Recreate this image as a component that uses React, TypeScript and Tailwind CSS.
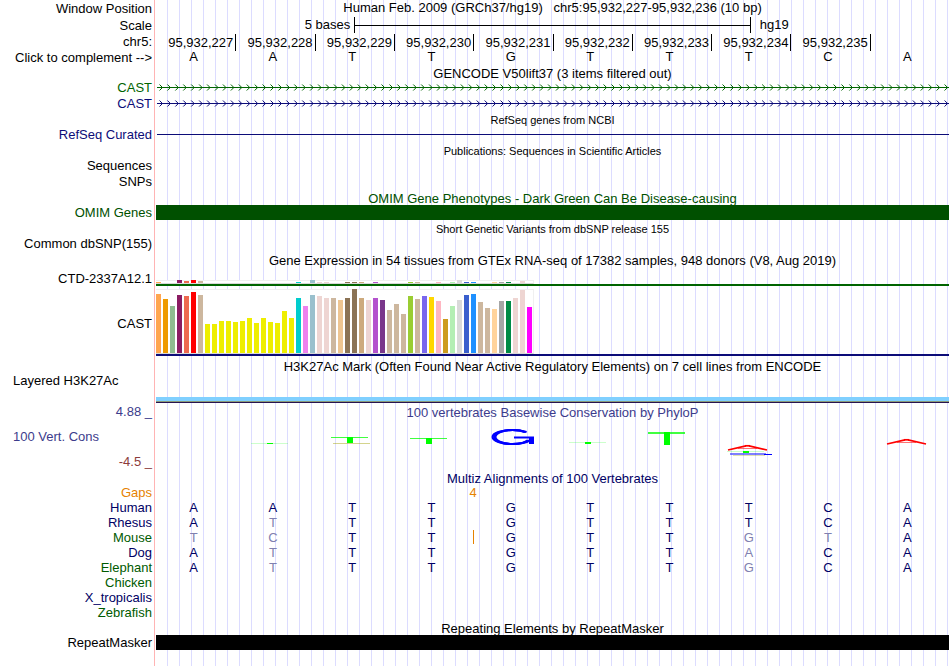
import React from "react";
import clsx from "clsx";

const POSITIONS = ["227", "228", "229", "230", "231", "232", "233", "234", "235"];
const BASES = "AATTGTTTCA".split("");

// GTEx tissues: bar color, CAST level, CTD-2337A12.1 level
const TISSUES: [string, number, number][] = [
  ["#ffa54f", 59, 1],
  ["#ee9a00", 54, 0],
  ["#8fbc8f", 47, 0],
  ["#8b1c62", 58, 3],
  ["#ee6a50", 57, 2],
  ["#ff0000", 61, 3],
  ["#cdb79e", 58, 2],
  ["#eeee00", 29, 0],
  ["#eeee00", 29, 0],
  ["#eeee00", 32, 0],
  ["#eeee00", 32, 0],
  ["#eeee00", 31, 0],
  ["#eeee00", 32, 0],
  ["#eeee00", 35, 0],
  ["#eeee00", 30, 0],
  ["#eeee00", 35, 0],
  ["#eeee00", 31, 0],
  ["#eeee00", 30, 0],
  ["#eeee00", 42, 0],
  ["#eeee00", 35, 0],
  ["#00cdcd", 55, 1],
  ["#ee82ee", 47, 0],
  ["#9ac0cd", 58, 3],
  ["#eed5d2", 57, 1],
  ["#eed5d2", 55, 1],
  ["#cdb79e", 55, 0],
  ["#eec591", 53, 0],
  ["#8b7355", 55, 1],
  ["#8b7355", 64, 1],
  ["#cdaa7d", 55, 1],
  ["#eed5d2", 53, 0],
  ["#b452cd", 55, 1],
  ["#7a378b", 53, 0],
  ["#cdb79e", 43, 0],
  ["#cdb79e", 49, 0],
  ["#cdb79e", 39, 0],
  ["#9acd32", 57, 1],
  ["#cdb79e", 54, 1],
  ["#7a67ee", 57, 0],
  ["#ffd700", 56, 0],
  ["#ffb6c1", 52, 1],
  ["#cd9b1d", 34, 0],
  ["#b4eeb4", 47, 1],
  ["#d9d9d9", 53, 3],
  ["#3a5fcd", 58, 1],
  ["#1e90ff", 59, 1],
  ["#cdb79e", 51, 0],
  ["#cdb79e", 45, 0],
  ["#ffd39b", 44, 1],
  ["#a6a6a6", 52, 1],
  ["#008b45", 52, 1],
  ["#eed5d2", 55, 0],
  ["#eed5d2", 63, 2],
  ["#ff00ff", 46, 0],
];

const SPECIES = [
  { name: "Human", color: "text-[#000064]", seq: "AATTGTTTCA" },
  { name: "Rhesus", color: "text-[#000064]", seq: "ATTTGTTTCA" },
  { name: "Mouse", color: "text-[#005a00]", seq: "TCTTGTTGTA" },
  { name: "Dog", color: "text-[#000064]", seq: "ATTTGTTACA" },
  { name: "Elephant", color: "text-[#005a00]", seq: "ATTTGTTGCA" },
  { name: "Chicken", color: "text-[#005a00]", seq: "" },
  { name: "X_tropicalis", color: "text-[#000064]", seq: "" },
  { name: "Zebrafish", color: "text-[#005a00]", seq: "" },
];

interface RowProps {
  label?: React.ReactNode;
  height?: string;
  labelClass?: string;
  children?: React.ReactNode;
}

function Row({ label, height = "h-4", labelClass, children }: RowProps) {
  return (
    <div className={clsx("flex", height)}>
      <div className={clsx("w-[156px] shrink-0 pr-1 text-right whitespace-nowrap", labelClass)}>{label}</div>
      <div className="min-w-0 flex-1">{children}</div>
    </div>
  );
}

interface TitleProps {
  children: React.ReactNode;
  small?: boolean;
  color?: string;
  label?: string;
  labelClass?: string;
}

function Title({ children, small, color, label, labelClass }: TitleProps) {
  return (
    <Row height="h-[15px]" label={label} labelClass={labelClass}>
      <h2 className={clsx("text-center leading-[17px] whitespace-pre", small && "text-[11px]", color)}>
        {children}
      </h2>
    </Row>
  );
}

function GeneLine({ color }: { color: string }) {
  return (
    <svg className="block h-[15px] w-full" stroke={color} fill="none">
      <line x1="1" x2="100%" y1="7.5" y2="7.5" shapeRendering="crispEdges" />
      {Array.from({ length: 100 }, (_, i) => (
        <svg key={i} x={`${i}%`} overflow="visible">
          <path d="M3.5 4.5 L6.5 7.5 L3.5 10.5" />
        </svg>
      ))}
    </svg>
  );
}

function Expression({ values, boxClass, lineClass }: { values: number[]; boxClass: string; lineClass: string }) {
  return (
    <>
      <div className={clsx("flex w-[378px] items-end gap-0.5 border-t border-r border-b border-[#f0f0f0] border-b-[#d8d8d8] bg-white", boxClass)}>
        {values.map((v, i) => (
          <div key={i} className="w-[5px] shrink-0" style={{ height: v, backgroundColor: TISSUES[i][0] }} />
        ))}
      </div>
      <div className={clsx("h-0.5", lineClass)} />
    </>
  );
}

// Wide, flat marks of the conservation logo
function LogoT({ y, h, bar = 1, faint }: { y: number; h: number; bar?: number; faint?: boolean }) {
  return (
    <g fill="#00ff00">
      <rect x="16" y={y} width="37" height={bar} opacity={faint ? 0.2 : 0.75} />
      <rect x="32" y={y} width="6" height={h} />
    </g>
  );
}

function LogoA({ y }: { y: number }) {
  return (
    <g stroke="#ff0000" strokeWidth="1.7">
      <line x1="17" y1={y + 5} x2="35" y2={y + 0.8} />
      <line x1="34" y1={y + 0.8} x2="39" y2={y + 0.8} />
      <line x1="38" y1={y + 0.8} x2="56" y2={y + 5} />
      <line x1="27" y1={y + 3.5} x2="46" y2={y + 3.5} strokeWidth="1" opacity="0.55" />
    </g>
  );
}

function LogoG() {
  return (
    <g fill="none" stroke="#0000ff">
      {[20, 18.5, 17].map((rx) => (
        <ellipse
          key={rx}
          cx="39.5"
          cy="18"
          rx={rx}
          ry="7"
          strokeWidth="2"
          pathLength="100"
          strokeDasharray="86 14"
          strokeDashoffset="-5"
        />
      ))}
      <line x1="41" y1="18.5" x2="61" y2="18.5" strokeWidth="2" />
      <line x1="58.5" y1="18" x2="58.5" y2="25" strokeWidth="5" />
    </g>
  );
}

const LOGO: Record<number, React.ReactNode> = {
  1: <LogoT y={24} h={1} faint />,
  2: (
    <>
      <LogoT y={18} h={6} />
      <rect x="18" y="24" width="37" height="1" fill="#a0a000" opacity="0.45" />
    </>
  ),
  3: <LogoT y={19} h={6} />,
  4: <LogoG />,
  5: <LogoT y={23} h={2} faint />,
  6: <LogoT y={13} h={13} bar={2} />,
  7: (
    <>
      <LogoA y={26} />
      <LogoT y={32} h={2} faint />
      <rect x="19" y="34" width="36" height="2" fill="#0000ff" opacity="0.5" />
      <rect x="53" y="35" width="8" height="1" fill="#0000ff" />
      <rect x="22" y="36" width="32" height="1" fill="#a0a000" opacity="0.3" />
    </>
  ),
  9: <LogoA y={20} />,
};

export default function App() {
  return (
    <main className="min-h-screen bg-white bg-[linear-gradient(#ffb4b4,#ffb4b4),repeating-linear-gradient(to_right,transparent_0_11px,#dcdcff_11px_12px)] bg-[size:1px_100%,100%_100%] bg-[position:154px_0,156px_0] bg-no-repeat pr-px font-['Liberation_Sans',Arial,sans-serif] text-[13px] leading-[15px] text-black">
      <Row height="h-[17px]" label="Window Position" labelClass="leading-[17px]">
        <h1 className="text-center whitespace-pre">
          {"Human Feb. 2009 (GRCh37/hg19)   chr5:95,932,227-95,932,236 (10 bp)"}
        </h1>
      </Row>

      <Row height="h-[17px]" label="Scale" labelClass="leading-[17px]">
        <div className="flex">
          <div className="w-1/4 pr-1 text-right">5 bases</div>
          <div className="flex h-4 w-1/2 items-center border-x border-black">
            <div className="h-px w-full bg-black" />
          </div>
          <div className="w-1/4 pl-[9px]">hg19</div>
        </div>
      </Row>

      <Row height="h-[15px]" label="chr5:">
        <div className="grid h-[15px] grid-cols-10">
          {POSITIONS.map((p) => (
            <div key={p} className="-mr-px border-r border-black pr-0.5 text-right leading-[17px]">
              95,932,{p}
            </div>
          ))}
        </div>
      </Row>

      <Row label={<button type="button" className="cursor-pointer">Click to complement --&gt;</button>} labelClass="leading-[17px]">
        <div className="grid grid-cols-10 text-center">
          {BASES.map((b, i) => (
            <div key={i} className="pr-1">{b}</div>
          ))}
        </div>
      </Row>

      <Title>GENCODE V50lift37 (3 items filtered out)</Title>
      <Row label="CAST" labelClass="text-[#006400]">
        <GeneLine color="#006400" />
      </Row>
      <Row label="CAST" labelClass="text-[#0c0c78]">
        <GeneLine color="#0c0c78" />
      </Row>

      <Title small>RefSeq genes from NCBI</Title>
      <Row label="RefSeq Curated" labelClass="text-[#0c0c78]">
        <div className="ml-px flex h-[15px] items-center">
          <div className="h-px w-full bg-[#0c0c78]" />
        </div>
      </Row>

      <Title small>Publications: Sequences in Scientific Articles</Title>
      <Row label="Sequences" />
      <Row label="SNPs" />

      <Title color="text-[#005000]">OMIM Gene Phenotypes - Dark Green Can Be Disease-causing</Title>
      <Row label="OMIM Genes" labelClass="text-[#005000]">
        <div className="h-[15px] bg-[#005000]" />
      </Row>

      <Title small>Short Genetic Variants from dbSNP release 155</Title>
      <Row label="Common dbSNP(155)" />

      <Title>Gene Expression in 54 tissues from GTEx RNA-seq of 17382 samples, 948 donors (V8, Aug 2019)</Title>
      <Row height="h-[21px]" label="CTD-2337A12.1" labelClass="pt-1">
        <div className="pt-[13px]">
          <Expression values={TISSUES.map((t) => t[2])} boxClass="h-1" lineClass="bg-[#006400]" />
        </div>
      </Row>
      <Row height="h-[70px]" label="CAST" labelClass="pt-7">
        <div className="pt-px">
          <Expression values={TISSUES.map((t) => t[1])} boxClass="h-[65px]" lineClass="bg-[#0c0c78]" />
        </div>
      </Row>

      <Title>H3K27Ac Mark (Often Found Near Active Regulatory Elements) on 7 cell lines from ENCODE</Title>
      <Row height="h-[31px]" label={<div className="pl-[13px] text-left">Layered H3K27Ac</div>}>
        <div className="pt-6">
          <div className="h-1 bg-[#80d0ff]" />
          <div className="h-px bg-[#8a9a78]" />
          <div className="h-px bg-[#281450]" />
        </div>
      </Row>

      <Title color="text-[#3c3c8c]" label="4.88 _" labelClass="text-[#3c3c8c]">
        100 vertebrates Basewise Conservation by PhyloP
      </Title>
      <Row
        height="h-[51px]"
        labelClass="flex flex-col gap-2.5 pt-2.5"
        label={
          <>
            <div className="pl-[13px] text-left text-[#3c3c8c]">100 Vert. Cons</div>
            <div className="text-[#8c3c3c]">-4.5 _</div>
          </>
        }
      >
        <div className="grid h-full grid-cols-10">
          {BASES.map((b, i) => (
            <svg key={i} className="block h-full w-full">
              {LOGO[i]}
            </svg>
          ))}
        </div>
      </Row>

      <Title color="text-[#000064]">Multiz Alignments of 100 Vertebrates</Title>
      <table className="w-full table-fixed border-collapse text-center text-[#000064]">
        <colgroup>
          <col className="w-[156px]" />
          {BASES.map((b, i) => (
            <col key={i} />
          ))}
        </colgroup>
        <tbody>
          <tr className="h-[15px] text-[#e68200]">
            <th scope="row" className="p-0 pr-1 text-right font-normal">Gaps</th>
            <td colSpan={3} className="p-0" />
            <td colSpan={2} className="p-0">4</td>
            <td colSpan={5} className="p-0" />
          </tr>
          {SPECIES.map((s) => (
            <tr key={s.name} className="h-[15px]">
              <th scope="row" className={clsx("p-0 pr-1 text-right font-normal", s.color)}>{s.name}</th>
              {BASES.map((b, i) => (
                <td key={i} className={clsx("p-0 align-top", s.seq[i] !== b && "text-[#8080b0]")}>
                  <div className={clsx("pr-1", s.name === "Mouse" && i === 3 && "-mr-px h-3.5 border-r border-[#e68200]")}>
                    {s.seq[i]}
                  </div>
                </td>
              ))}
            </tr>
          ))}
        </tbody>
      </table>

      <Title>Repeating Elements by RepeatMasker</Title>
      <Row height="h-[31px]" label="RepeatMasker">
        <div className="h-[15px] bg-black" />
      </Row>
    </main>
  );
}
